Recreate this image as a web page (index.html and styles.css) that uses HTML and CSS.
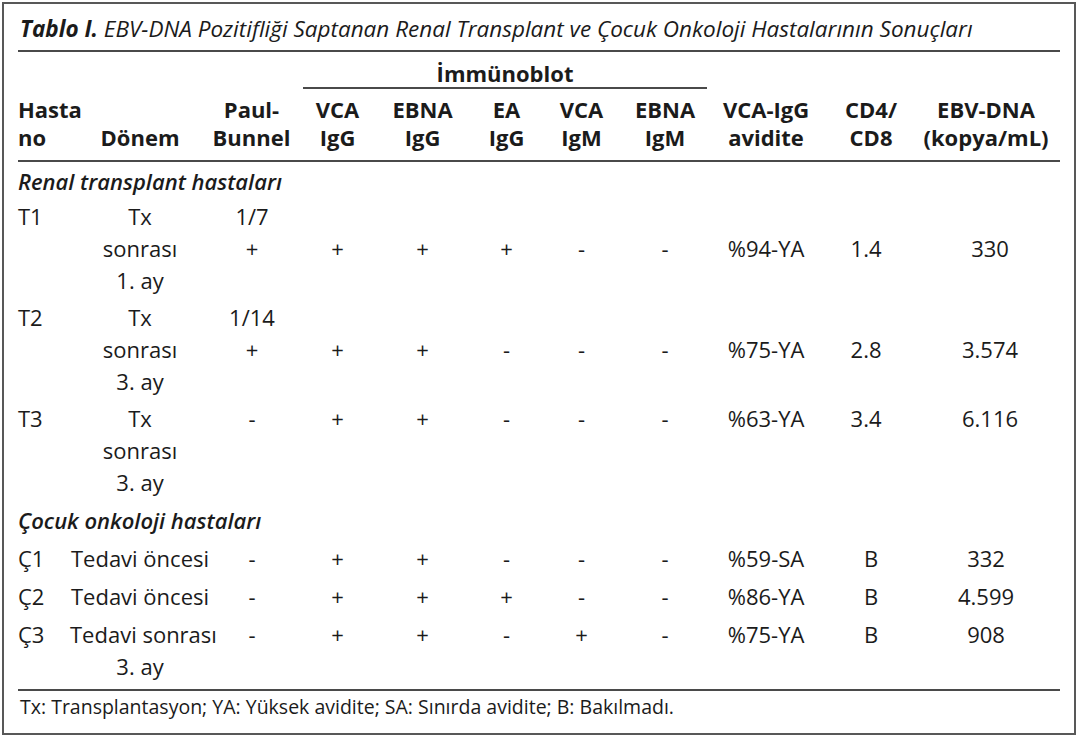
FILE: index.html
```html
<!DOCTYPE html>
<html lang="tr">
<head>
<meta charset="utf-8">
<title>Tablo I</title>
<link rel="stylesheet" href="styles.css">
</head>
<body>
<div class="frame">
  <div class="title"><b>Tablo I.</b> EBV-DNA Pozitifliği Saptanan Renal Transplant ve Çocuk Onkoloji Hastalarının Sonuçları</div>
  <table class="tbl">
    <colgroup>
      <col class="w1"><col class="w2"><col class="w3"><col class="w4"><col class="w5"><col class="w6"><col class="w7"><col class="w8"><col class="w9"><col class="w10"><col class="w11">
    </colgroup>
    <thead>
      <tr class="grp">
        <th colspan="3"></th>
        <th colspan="5" class="immuno"><span class="immuno-lbl">İmmünoblot</span></th>
        <th colspan="3"></th>
      </tr>
      <tr class="hdr">
        <th class="left">Hasta<br>no</th>
        <th><br>Dönem</th>
        <th class="pb">Paul-<br>Bunnel</th>
        <th>VCA<br>IgG</th>
        <th>EBNA<br>IgG</th>
        <th>EA<br>IgG</th>
        <th>VCA<br>IgM</th>
        <th>EBNA<br>IgM</th>
        <th>VCA-IgG<br>avidite</th>
        <th>CD4/<br>CD8</th>
        <th class="last">EBV-DNA<br>(kopya/mL)</th>
      </tr>
    </thead>
    <tbody>
      <tr class="section first"><td colspan="11">Renal transplant hastaları</td></tr>
      <tr class="trow">
        <td class="left">T1</td>
        <td class="per">Tx<br>sonrası<br>1. ay</td>
        <td class="pbd">1/7<br>+</td>
        <td><br>+</td><td><br>+</td><td><br>+</td><td><br>-</td><td><br>-</td>
        <td><br>%94-YA</td><td class="cd"><br>1.4</td><td class="last"><br>330</td>
      </tr>
      <tr class="trow">
        <td class="left">T2</td>
        <td class="per">Tx<br>sonrası<br>3. ay</td>
        <td class="pbd">1/14<br>+</td>
        <td><br>+</td><td><br>+</td><td><br>-</td><td><br>-</td><td><br>-</td>
        <td><br>%75-YA</td><td class="cd"><br>2.8</td><td class="last"><br>3.574</td>
      </tr>
      <tr class="trow">
        <td class="left">T3</td>
        <td class="per">Tx<br>sonrası<br>3. ay</td>
        <td class="pbd">-</td>
        <td>+</td><td>+</td><td>-</td><td>-</td><td>-</td>
        <td>%63-YA</td><td class="cd">3.4</td><td class="last">6.116</td>
      </tr>
      <tr class="section"><td colspan="11">Çocuk onkoloji hastaları</td></tr>
      <tr>
        <td class="left">Ç1</td>
        <td class="per">Tedavi öncesi</td>
        <td class="pbd">-</td>
        <td>+</td><td>+</td><td>-</td><td>-</td><td>-</td>
        <td>%59-SA</td><td>B</td><td class="last">332</td>
      </tr>
      <tr>
        <td class="left">Ç2</td>
        <td class="per">Tedavi öncesi</td>
        <td class="pbd">-</td>
        <td>+</td><td>+</td><td>+</td><td>-</td><td>-</td>
        <td>%86-YA</td><td>B</td><td class="last">4.599</td>
      </tr>
      <tr class="lastrow">
        <td class="left">Ç3</td>
        <td class="per">Tedavi sonrası<br>3. ay</td>
        <td class="pbd">-</td>
        <td>+</td><td>+</td><td>-</td><td>+</td><td>-</td>
        <td>%75-YA</td><td>B</td><td class="last">908</td>
      </tr>
    </tbody>
  </table>
  <div class="note">Tx: Transplantasyon; YA: Yüksek avidite; SA: Sınırda avidite; B: Bakılmadı.</div>
</div>
</body>
</html>
```

FILE: styles.css
```css
html, body {
  margin: 0;
  padding: 0;
  background: #ffffff;
}

body {
  font-family: "Open Sans", "Liberation Sans", sans-serif;
  color: #1b1b1b;
}

.frame {
  margin: 2px;
  width: 1042px;
  height: 729px;
  border: 2px solid #585858;
  padding: 0 14px;
  box-sizing: content-box;
}

.title {
  font-style: italic;
  font-size: 22.5px;
  line-height: 26px;
  padding: 12px 0 8px 2px;
  border-bottom: 2px solid #4a4a4a;
  white-space: nowrap;
}

.title b {
  font-weight: 700;
}

.tbl {
  width: 1042px;
  table-layout: fixed;
  border-collapse: collapse;
  border-spacing: 0;
}

.w1 { width: 52px; }
.w2 { width: 140px; }
.w3 { width: 90px; }
.w4 { width: 75px; }
.w5 { width: 95px; }
.w6 { width: 73px; }
.w7 { width: 77px; }
.w8 { width: 90px; }
.w9 { width: 112px; }
.w10 { width: 98px; }
.w11 { width: 140px; }

.tbl th {
  font-weight: 700;
  font-size: 22px;
  padding: 0;
  text-align: center;
  white-space: nowrap;
}

.grp th {
  line-height: 26px;
  padding-top: 8px;
}

.grp th.immuno {
  padding: 8px 3px 0 3px;
}

.immuno-lbl {
  display: block;
  border-bottom: 2px solid #4a4a4a;
  line-height: 26px;
  padding-bottom: 1px;
}

.hdr th {
  line-height: 28px;
  padding-top: 6px;
  padding-bottom: 9px;
  border-bottom: 2px solid #4a4a4a;
}

.tbl th.left,
.tbl td.left {
  text-align: left;
}

.tbl th.pb {
  padding-right: 7px;
}

.tbl th.last,
.tbl td.last {
  padding-right: 8px;
}

.tbl td {
  font-size: 22px;
  line-height: 32px;
  padding: 3px 0;
  text-align: center;
  vertical-align: top;
  white-space: nowrap;
}

.tbl .trow td {
  padding: 2px 0 3px;
}

.tbl td.pbd {
  padding-right: 6px;
}

.tbl td.cd {
  padding-right: 10px;
}

.section td {
  text-align: left;
  font-style: italic;
  font-weight: 600;
}

.tbl .section.first td {
  padding: 3px 0 1px;
}

.tbl .lastrow td {
  padding-bottom: 7px;
}

.note {
  border-top: 2px solid #4a4a4a;
  font-size: 19.5px;
  line-height: 24px;
  padding: 4px 0 0 2px;
  white-space: nowrap;
}
```
